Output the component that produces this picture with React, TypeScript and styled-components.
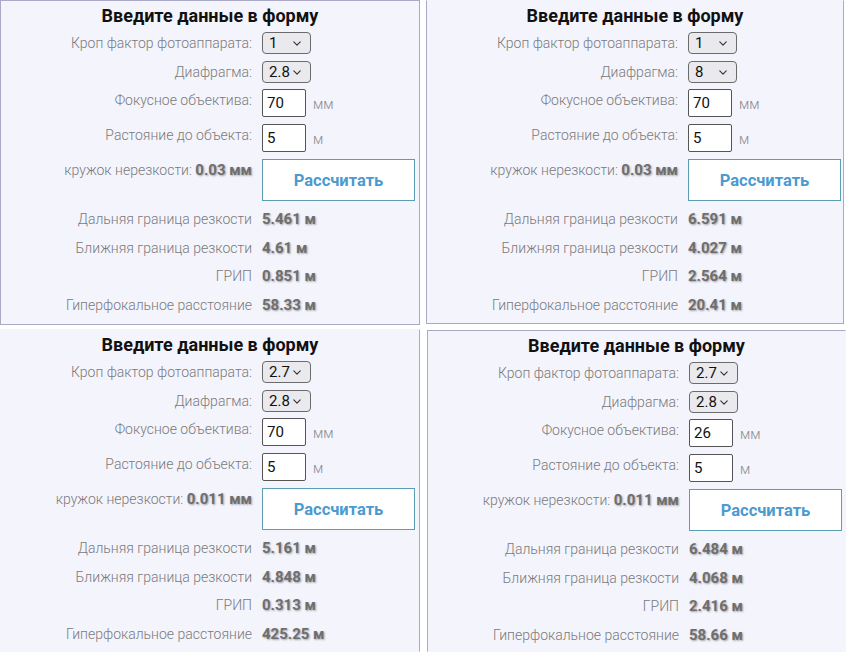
import React from 'react'
import styled, { createGlobalStyle } from 'styled-components'

type Result = {
  crop: string
  aperture: string
  focal: string
  distance: string
  coc: string
  far: string
  near: string
  dof: string
  hyper: string
}

type Frame = {
  ml: number
  mt: number
  width: number
  height: number
  borders: [boolean, boolean, boolean, boolean] // top right bottom left
}

const panels: { frame: Frame; data: Result }[] = [
  {
    frame: { ml: 0, mt: 0, width: 420, height: 325, borders: [true, true, true, true] },
    data: { crop: '1', aperture: '2.8', focal: '70', distance: '5', coc: '0.03 мм', far: '5.461 м', near: '4.61 м', dof: '0.851 м', hyper: '58.33 м' },
  },
  {
    frame: { ml: 6, mt: 0, width: 418, height: 324, borders: [false, true, true, true] },
    data: { crop: '1', aperture: '8', focal: '70', distance: '5', coc: '0.03 мм', far: '6.591 м', near: '4.027 м', dof: '2.564 м', hyper: '20.41 м' },
  },
  {
    frame: { ml: 0, mt: 3, width: 420, height: 323, borders: [false, true, false, false] },
    data: { crop: '2.7', aperture: '2.8', focal: '70', distance: '5', coc: '0.011 мм', far: '5.161 м', near: '4.848 м', dof: '0.313 м', hyper: '425.25 м' },
  },
  {
    frame: { ml: 7, mt: 4, width: 419, height: 322, borders: [true, false, false, true] },
    data: { crop: '2.7', aperture: '2.8', focal: '26', distance: '5', coc: '0.011 мм', far: '6.484 м', near: '4.068 м', dof: '2.416 м', hyper: '58.66 м' },
  },
]

const GlobalStyle = createGlobalStyle`
  html, body {
    margin: 0;
    padding: 0;
    background: #ffffff;
  }
  body {
    font-family: Roboto, "Liberation Sans", sans-serif;
  }
`

export default function App() {
  return (
    <>
      <GlobalStyle />
      <Collage>
        {panels.map((p, i) => (
          <CalcPanel key={i} frame={p.frame} data={p.data} />
        ))}
      </Collage>
    </>
  )
}

const Chevron = () => (
  <ChevronIcon viewBox="0 0 10 6" width="8" height="5">
    <path d="M1 1l4 4 4-4" fill="none" stroke="#333" strokeWidth="1.4" strokeLinecap="round" strokeLinejoin="round" />
  </ChevronIcon>
)

const CalcPanel = ({ frame, data }: { frame: Frame; data: Result }) => (
  <Panel $frame={frame}>
    <Title>Введите данные в форму</Title>
    <Row $gap={5}>
      <Label>Кроп фактор фотоаппарата:</Label>
      <SelectBox>
        <Select defaultValue={data.crop}>
          <option>{data.crop}</option>
        </Select>
        <Chevron />
      </SelectBox>
    </Row>
    <Row $gap={7}>
      <Label>Диафрагма:</Label>
      <SelectBox>
        <Select defaultValue={data.aperture}>
          <option>{data.aperture}</option>
        </Select>
        <Chevron />
      </SelectBox>
    </Row>
    <Row $gap={6} $top>
      <Label>Фокусное объектива:</Label>
      <Control>
        <NumberInput defaultValue={data.focal} />
        <Unit>мм</Unit>
      </Control>
    </Row>
    <Row $gap={7} $top>
      <Label>Растояние до объекта:</Label>
      <Control>
        <NumberInput defaultValue={data.distance} />
        <Unit>м</Unit>
      </Control>
    </Row>
    <Row $gap={7} $top>
      <Label>
        кружок нерезкости: <Value>{data.coc}</Value>
      </Label>
      <Control>
        <CalcButton type="button">Рассчитать</CalcButton>
      </Control>
    </Row>
    <ResultRow $gap={8}>
      <Label>Дальняя граница резкости</Label>
      <Value>{data.far}</Value>
    </ResultRow>
    <ResultRow $gap={8.7}>
      <Label>Ближняя граница резкости</Label>
      <Value>{data.near}</Value>
    </ResultRow>
    <ResultRow $gap={8.7}>
      <Label>ГРИП</Label>
      <Value>{data.dof}</Value>
    </ResultRow>
    <ResultRow $gap={8.7}>
      <Label>Гиперфокальное расстояние</Label>
      <Value>{data.hyper}</Value>
    </ResultRow>
  </Panel>
)

const edge = (on: boolean) => (on ? '#aaa9c6' : 'transparent')

const Collage = styled.div`
  display: grid;
  grid-template-columns: 420px 426px;
  grid-template-rows: 326px 326px;
  width: 846px;
  height: 652px;
  overflow: hidden;
`

const Panel = styled.section<{ $frame: Frame }>`
  box-sizing: border-box;
  display: flex;
  flex-direction: column;
  margin-left: ${(p) => p.$frame.ml}px;
  margin-top: ${(p) => p.$frame.mt}px;
  width: ${(p) => p.$frame.width}px;
  height: ${(p) => p.$frame.height}px;
  background: #f4f4fd;
  border: 1px solid;
  border-color: ${(p) => p.$frame.borders.map(edge).join(' ')};
  overflow: hidden;
`

const Title = styled.h2`
  margin: 4px 0 0;
  font-size: 18px;
  line-height: 22px;
  font-weight: 700;
  color: #111;
  text-align: center;
`

const Row = styled.div<{ $gap: number; $top?: boolean }>`
  display: grid;
  grid-template-columns: 251px auto;
  column-gap: 10px;
  align-items: ${(p) => (p.$top ? 'start' : 'center')};
  margin-top: ${(p) => p.$gap}px;

  & > div:first-child {
    padding-top: ${(p) => (p.$top ? 1 : 0)}px;
  }
`

const ResultRow = styled(Row)`
  align-items: center;
`

const Label = styled.div`
  text-align: right;
  font-size: 14px;
  line-height: 20px;
  font-weight: 300;
  color: #7a7a7a;
  white-space: nowrap;
`

const Value = styled.span`
  font-size: 15px;
  line-height: 20px;
  font-weight: 700;
  color: #6e6e6e;
  text-shadow: 1px 1px 2px rgba(0, 0, 0, 0.35);
  white-space: nowrap;
`

const Control = styled.div`
  display: flex;
  align-items: center;
  gap: 7px;
`

const SelectBox = styled.div`
  position: relative;
  width: 49px;
  height: 22px;
`

const Select = styled.select`
  appearance: none;
  box-sizing: border-box;
  width: 100%;
  height: 100%;
  margin: 0;
  padding: 0 0 0 6px;
  border: 1px solid #6b6b6b;
  border-radius: 4px;
  background: #e9e9ee;
  font-family: Roboto, "Liberation Sans", sans-serif;
  font-size: 15px;
  color: #111;
`

const ChevronIcon = styled.svg`
  position: absolute;
  right: 10px;
  top: 9px;
  pointer-events: none;
`

const NumberInput = styled.input`
  box-sizing: border-box;
  width: 44px;
  height: 28px;
  margin: 0;
  padding: 0 0 0 4px;
  border: 1px solid #555;
  border-radius: 2px;
  background: #fff;
  font-family: Roboto, "Liberation Sans", sans-serif;
  font-size: 15px;
  color: #111;
  outline: none;
`

const Unit = styled.span`
  font-size: 14px;
  font-weight: 300;
  color: #8a8a8a;
  padding-top: 2px;
`

const CalcButton = styled.button`
  box-sizing: border-box;
  width: 153px;
  height: 42px;
  margin: 0;
  border: 1px solid #5a9db5;
  border-radius: 0;
  background: #ffffff;
  font-family: Roboto, "Liberation Sans", sans-serif;
  font-size: 16.5px;
  font-weight: 700;
  color: #4b9ad0;
  cursor: pointer;
`
